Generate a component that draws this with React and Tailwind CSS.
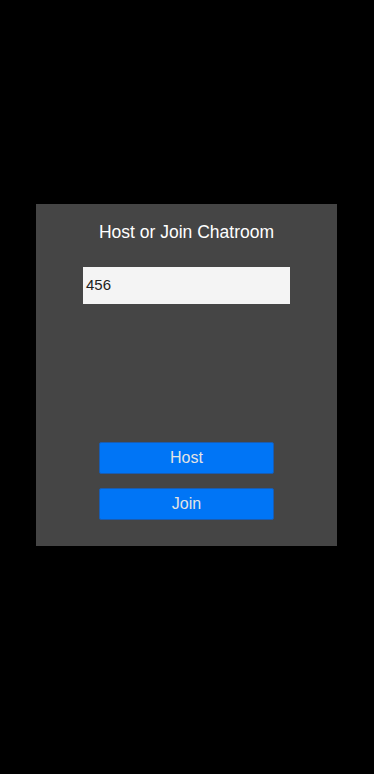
export default function App() {
  return (
    <div className="w-full min-h-[774px] bg-black pt-[204px]" style={{ fontFamily: '"Liberation Sans", Arial, sans-serif' }}>
      <div className="ml-[36px] w-[301px] h-[342px] bg-[#454545] flex flex-col items-center">
        <div className="mt-[18px] h-[20px] leading-[20px] text-[17.5px] text-white">Host or Join Chatroom</div>
        <div className="mt-[25px] w-[207px] h-[37px] bg-[#f4f4f4] flex items-center pl-[3px] text-[15px] text-[#222]">456</div>
        <div className="mt-[138px] flex flex-col gap-[14px]">
          <button className="w-[175px] h-[32px] bg-[#0075f6] rounded-[2px] border border-[#1a5cb0] text-[16px] text-[#e4e4e4] flex items-center justify-center">Host</button>
          <button className="w-[175px] h-[32px] bg-[#0075f6] rounded-[2px] border border-[#1a5cb0] text-[16px] text-[#e4e4e4] flex items-center justify-center">Join</button>
        </div>
      </div>
    </div>
  );
}
